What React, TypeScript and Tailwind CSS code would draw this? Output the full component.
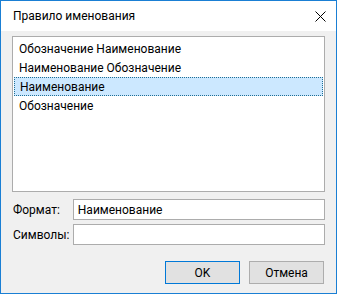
const items = [
  "Обозначение Наименование",
  "Наименование Обозначение",
  "Наименование",
  "Обозначение",
];

const font = { fontFamily: "Roboto, 'Noto Sans', sans-serif" };

export default function App() {
  return (
    <div
      className="flex h-[294px] w-[337px] flex-col border border-[#1a7fd4] bg-[#f0f0f0] text-[12px] text-black"
      style={font}
    >
      <div className="flex h-[30px] shrink-0 items-center justify-between bg-white pl-[12px] pr-[10px]">
        <span className="text-[12px]">Правило именования</span>
        <svg width="11" height="11" viewBox="0 0 11 11" className="mt-[1px]">
          <path d="M0.5 0.5 L10.5 10.5 M10.5 0.5 L0.5 10.5" stroke="#000" strokeWidth="1" />
        </svg>
      </div>

      <div className="flex flex-1 flex-col px-[11px] pt-[5px]">
        <div className="h-[156px] w-[313px] border border-[#acacac] bg-white p-[1px] pt-[2px]">
          {items.map((item, i) => (
            <div
              key={item}
              className={`flex h-[19px] items-center px-[5px] leading-none ${
                i === 2
                  ? "border border-dotted border-[#1f6f96] bg-[#cce8ff] px-[4px]"
                  : ""
              }`}
            >
              {item}
            </div>
          ))}
        </div>

        <div className="mt-[7px] flex items-center">
          <span className="w-[61px] pl-[1px]">Формат:</span>
          <div className="flex h-[21px] w-[253px] items-center border border-[#acacac] bg-white px-[4px]">
            Наименование
          </div>
        </div>
        <div className="mt-[4px] flex items-center">
          <span className="w-[61px] pl-[1px]">Символы:</span>
          <div className="h-[21px] w-[253px] border border-[#acacac] bg-white" />
        </div>

        <div className="mt-[16px] flex justify-end gap-[9px] pr-[1px]">
          <button className="h-[23px] w-[75px] border border-[#0078d7] bg-[#e1e1e1] text-[12px]">
            OK
          </button>
          <button className="h-[23px] w-[75px] border border-[#adadad] bg-[#e1e1e1] text-[12px]">
            Отмена
          </button>
        </div>
      </div>
    </div>
  );
}
